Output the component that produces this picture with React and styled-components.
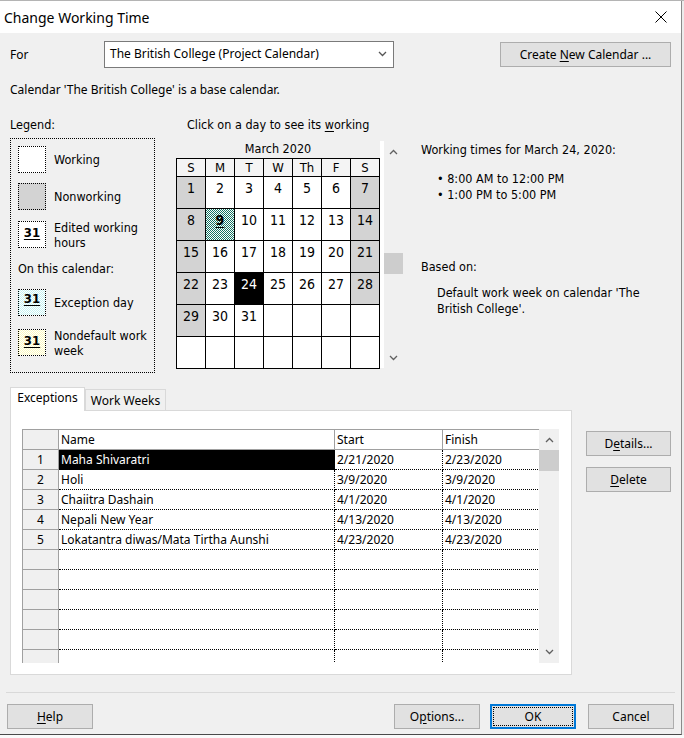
import React from "react";
import styled, { createGlobalStyle, css } from "styled-components";

const UI = `"Noto Sans", "Open Sans", Arial, sans-serif`;
const TH = `"DejaVu Sans Condensed", "DejaVu Sans", sans-serif`;

const GlobalStyle = createGlobalStyle`
  html, body { margin: 0; padding: 0; }
  body { width: 684px; height: 738px; overflow: hidden; background: #ececec; font-family: ${UI}; color: #000; }
  * { box-sizing: border-box; }
`;

const Screen = styled.div`
  width: 684px;
  height: 738px;
  border-top: 1px solid #b4b4b4;
  display: flex;
  flex-direction: column;
  background: #ececec;
`;

const Dialog = styled.div`
  width: 682px;
  height: 734px;
  flex: none;
  display: flex;
  flex-direction: column;
  background: #f0f0f0;
  border-right: 1px solid #8a8a8a;
  border-bottom: 1px solid #4a4a4a;
`;

const BackStrip = styled.div`
  flex: 1;
  background: #fafafa;
`;

const TitleBar = styled.div`
  height: 32px;
  flex: none;
  background: #fff;
  display: flex;
  align-items: center;
  padding-left: 4px;
  font: 14px ${UI};
`;

const CloseBox = styled.div`
  margin-left: auto;
  margin-right: 14px;
  width: 12px;
  height: 12px;
  display: flex;
`;

const Body = styled.div`
  flex: 1;
  display: flex;
  flex-direction: column;
  font: 12px ${UI};
`;

const ForRow = styled.div`
  display: flex;
  align-items: center;
  margin-top: 8px;
  padding: 0 10px;
`;

const ForLabel = styled.div`
  width: 94px;
`;

const Combo = styled.div`
  width: 290px;
  height: 27px;
  background: #fff;
  border: 1px solid #7a7a7a;
  display: flex;
  align-items: center;
  padding: 0 6px 2px 5px;
`;

const ComboText = styled.span`
  flex: 1;
`;

const Btn = styled.button`
  width: ${(p) => p.$w || 86}px;
  height: 25px;
  flex: none;
  padding: 0;
  margin-left: ${(p) => p.$ml || 0}px;
  background: #e1e1e1;
  border: 1px solid #adadad;
  font: 12px ${UI};
  color: #000;
  position: relative;
  ${(p) =>
    p.$primary &&
    css`
      border: 2px solid #0078d7;
      &::after {
        content: "";
        position: absolute;
        inset: 1px;
        border: 1px dotted #000;
      }
    `}
`;

const U = styled.span`
  text-decoration: underline;
  text-underline-offset: 2px;
`;

const Line = styled.div`
  margin: ${(p) => p.$m || "0"};
  line-height: 16px;
`;

const Middle = styled.div`
  display: flex;
  margin-top: 19px;
  padding-left: 10px;
  font: 12.5px ${TH};
`;

const LegendCol = styled.div`
  width: 145px;
  flex: none;
  display: flex;
  flex-direction: column;
`;

const Heading = styled.div`
  line-height: 16px;
  height: 16px;
  padding-left: ${(p) => p.$pl || 0}px;
`;

const LegendBox = styled.div`
  margin-top: 5px;
  height: 235px;
  border: 1px dotted #000;
  padding: 7px 0 0 7px;
  display: flex;
  flex-direction: column;
`;

const LegendItem = styled.div`
  display: flex;
  align-items: center;
  gap: 8px;
  height: 27px;
  margin-top: ${(p) => p.$mt || 0}px;
  line-height: 15px;
`;

const LegendSub = styled.div`
  margin-top: ${(p) => p.$mt || 0}px;
  line-height: 16px;
`;

const swatchBg = {
  working: "#fff",
  nonworking: "#d3d3d3",
  edited: "#fff",
  exception: "repeating-conic-gradient(#c6f3f3 0 25%, #ffffff 0 50%) 0 0 / 2px 2px",
  nondefault: "repeating-conic-gradient(#fcfac0 0 25%, #ffffff 0 50%) 0 0 / 2px 2px",
};

const Swatch = styled.div`
  width: 28px;
  height: 27px;
  flex: none;
  border: 1px dotted #000;
  background: ${(p) => swatchBg[p.$kind]};
  display: flex;
  justify-content: center;
  padding-top: ${(p) => (p.$kind === "exception" ? 1 : 3)}px;
  font: bold 13px ${TH};
  line-height: 16px;
`;

const Num31 = styled.span`
  text-decoration: underline;
  text-underline-offset: 2px;
`;

const CalCol = styled.div`
  margin-left: 21px;
  display: flex;
  flex-direction: column;
`;

const CalRow = styled.div`
  display: flex;
  margin-top: 8px;
`;

const Calendar = styled.div`
  width: 204px;
  display: flex;
  flex-direction: column;
`;

const MonthTitle = styled.div`
  height: 17px;
  line-height: 16px;
  text-align: center;
  font: 12.5px ${TH};
`;

const Grid = styled.div`
  display: grid;
  grid-template-columns: repeat(7, 28px);
  grid-template-rows: 17px repeat(6, 31px);
  gap: 1px;
  background: #000;
  border: 1px solid #000;
`;

const DayHead = styled.div`
  background: #f4f4f4;
  text-align: center;
  font: 13px ${TH};
  line-height: 17px;
`;

const dayBg = {
  empty: "#fff",
  work: "#fff",
  off: "#d3d3d3",
  sel: "#000",
  exc: "repeating-conic-gradient(#157563 0 25%, #ffffff 0 50%) 0 0 / 2px 2px",
};

const Day = styled.div`
  background: ${(p) => dayBg[p.$kind]};
  color: ${(p) => (p.$kind === "sel" ? "#fff" : "#000")};
  text-align: center;
  padding-top: 2px;
  font: ${(p) => (p.$kind === "exc" ? "bold " : "")}14px ${TH};
  line-height: 18px;
  ${(p) =>
    p.$kind === "exc" &&
    css`
      text-decoration: underline;
      text-underline-offset: 2px;
    `}
`;

const WhiteStrip = styled.div`
  width: 4px;
  height: 227px;
  background: #fff;
`;

const VScroll = styled.div`
  width: ${(p) => p.$w}px;
  height: ${(p) => p.$h}px;
  flex: none;
  display: flex;
  flex-direction: column;
  background: ${(p) => p.$bg || "transparent"};
`;

const ArrowBox = styled.div`
  height: ${(p) => p.$h}px;
  flex: none;
  display: flex;
  align-items: center;
  justify-content: center;
`;

const Thumb = styled.div`
  height: ${(p) => p.$h}px;
  margin-top: ${(p) => p.$mt || 0}px;
  background: #cdcdcd;
  flex: none;
`;

const Spacer = styled.div`
  flex: 1;
`;

const InfoCol = styled.div`
  margin-left: 18px;
  padding-top: 25px;
  display: flex;
  flex-direction: column;
`;

const InfoLine = styled.div`
  line-height: 16px;
  margin-top: ${(p) => p.$mt || 0}px;
  padding-left: ${(p) => p.$pl || 0}px;
`;

const TabsRow = styled.div`
  display: flex;
  margin-top: 14px;
  padding: 0 10px;
`;

const TabArea = styled.div`
  width: 562px;
  display: flex;
  flex-direction: column;
`;

const TabStrip = styled.div`
  height: 24px;
  display: flex;
  align-items: flex-end;
  margin-bottom: -1px;
  position: relative;
  z-index: 1;
`;

const Tab = styled.div`
  height: ${(p) => (p.$active ? 24 : 22)}px;
  width: ${(p) => p.$w}px;
  background: ${(p) => (p.$active ? "#fff" : "#f0f0f0")};
  border: 1px solid #d9d9d9;
  border-bottom: ${(p) => (p.$active ? "none" : "1px solid #d9d9d9")};
  text-align: center;
  font: 12px ${UI};
  line-height: ${(p) => (p.$active ? 20 : 21)}px;
`;

const Panel = styled.div`
  height: 265px;
  background: #fff;
  border: 1px solid #d9d9d9;
  padding: 18px 0 0 11px;
`;

const Table = styled.div`
  width: 537px;
  height: 234px;
  display: flex;
  overflow: hidden;
`;

const TGrid = styled.div`
  width: 517px;
  display: grid;
  grid-template-columns: 36px 276px 108px 97px;
  grid-auto-rows: 20px;
  border-top: 1px solid #a0a0a0;
  border-left: 1px solid #a0a0a0;
  align-content: start;
  font: 12px ${UI};
`;

const HCell = styled.div`
  background: ${(p) => (p.$corner ? "#f0f0f0" : "#fff")};
  border-right: 1px solid #a0a0a0;
  border-bottom: 1px solid #a0a0a0;
  padding-left: 2px;
  line-height: 19px;
`;

const RCell = styled.div`
  background: #f0f0f0;
  border-right: 1px solid #a0a0a0;
  border-bottom: 1px solid #a0a0a0;
  text-align: center;
  line-height: 19px;
`;

const DCell = styled.div`
  background: ${(p) => (p.$sel ? "#000" : "#fff")};
  color: ${(p) => (p.$sel ? "#fff" : "#000")};
  border-bottom: 1px dotted #000;
  border-right: ${(p) => (p.$last ? "none" : "1px dotted #000")};
  padding-left: 2px;
  line-height: 19px;
  white-space: nowrap;
  overflow: hidden;
`;

const SideButtons = styled.div`
  margin-left: 14px;
  margin-top: 44px;
  display: flex;
  flex-direction: column;
  gap: 11px;
`;

const Separator = styled.div`
  margin: 17px 6px 0 6px;
  height: 1px;
  background: #d9d9d9;
`;

const Footer = styled.div`
  display: flex;
  margin-top: 11px;
  padding: 0 7px;
`;

const Gap = styled.div`
  width: ${(p) => p.$w}px;
  flex: none;
`;

const Chevron = ({ down, color = "#606060", w = 9, h = 6 }) => (
  <svg width={w} height={h} viewBox="0 0 9 6">
    <polyline
      points={down ? "1,1 4.5,4.5 8,1" : "1,5 4.5,1.5 8,5"}
      fill="none"
      stroke={color}
      strokeWidth="1.3"
    />
  </svg>
);

const CloseIcon = () => (
  <svg width="12" height="12" viewBox="0 0 12 12">
    <path d="M0.5 0.5 L11.5 11.5 M11.5 0.5 L0.5 11.5" stroke="#000" strokeWidth="1" fill="none" />
  </svg>
);

const weeks = [
  [1, 2, 3, 4, 5, 6, 7],
  [8, 9, 10, 11, 12, 13, 14],
  [15, 16, 17, 18, 19, 20, 21],
  [22, 23, 24, 25, 26, 27, 28],
  [29, 30, 31, null, null, null, null],
  [null, null, null, null, null, null, null],
];

const dayKind = (d, col) => {
  if (d == null) return "empty";
  if (d === 24) return "sel";
  if (d === 9) return "exc";
  if (col === 0 || col === 6) return "off";
  return "work";
};

const exceptions = [
  ["Maha Shivaratri", "2/21/2020", "2/23/2020"],
  ["Holi", "3/9/2020", "3/9/2020"],
  ["Chaiitra Dashain", "4/1/2020", "4/1/2020"],
  ["Nepali New Year", "4/13/2020", "4/13/2020"],
  ["Lokatantra diwas/Mata Tirtha Aunshi", "4/23/2020", "4/23/2020"],
];

export default function App() {
  const rows = [];
  for (let i = 0; i < 11; i++) rows.push(exceptions[i] || null);

  return (
    <>
      <GlobalStyle />
      <Screen>
        <Dialog>
          <TitleBar>
            Change Working Time
            <CloseBox>
              <CloseIcon />
            </CloseBox>
          </TitleBar>
          <Body>
            <ForRow>
              <ForLabel>For</ForLabel>
              <Combo>
                <ComboText>The British College (Project Calendar)</ComboText>
                <Chevron down color="#555" w={9} h={6} />
              </Combo>
              <Gap $w={106} />
              <Btn $w={171}>
                Create <U>N</U>ew Calendar ...
              </Btn>
            </ForRow>
            <Line $m="14px 0 0 10px">Calendar 'The British College' is a base calendar.</Line>

            <Middle>
              <LegendCol>
                <Heading>Legend:</Heading>
                <LegendBox>
                  <LegendItem>
                    <Swatch $kind="working" />
                    Working
                  </LegendItem>
                  <LegendItem $mt={10}>
                    <Swatch $kind="nonworking" />
                    Nonworking
                  </LegendItem>
                  <LegendItem $mt={11}>
                    <Swatch $kind="edited">
                      <Num31>31</Num31>
                    </Swatch>
                    <span>
                      Edited working
                      <br />
                      hours
                    </span>
                  </LegendItem>
                  <LegendSub $mt={13}>On this calendar:</LegendSub>
                  <LegendItem $mt={12}>
                    <Swatch $kind="exception">
                      <Num31>31</Num31>
                    </Swatch>
                    Exception day
                  </LegendItem>
                  <LegendItem $mt={13}>
                    <Swatch $kind="nondefault">
                      <Num31>31</Num31>
                    </Swatch>
                    <span>
                      Nondefault work
                      <br />
                      week
                    </span>
                  </LegendItem>
                </LegendBox>
              </LegendCol>

              <CalCol>
                <Heading $pl={11}>
                  Click on a day to see its <U>w</U>orking
                </Heading>
                <CalRow>
                  <Calendar>
                    <MonthTitle>March 2020</MonthTitle>
                    <Grid>
                      {["S", "M", "T", "W", "Th", "F", "S"].map((h, i) => (
                        <DayHead key={"h" + i}>{h}</DayHead>
                      ))}
                      {weeks.map((w, r) =>
                        w.map((d, c) => (
                          <Day key={r + "-" + c} $kind={dayKind(d, c)}>
                            {d}
                          </Day>
                        ))
                      )}
                    </Grid>
                  </Calendar>
                  <WhiteStrip />
                  <VScroll $w={19} $h={227}>
                    <ArrowBox $h={22}>
                      <Chevron />
                    </ArrowBox>
                    <Thumb $h={21} $mt={90} />
                    <Spacer />
                    <ArrowBox $h={20}>
                      <Chevron down />
                    </ArrowBox>
                  </VScroll>
                </CalRow>
              </CalCol>

              <InfoCol>
                <InfoLine>Working times for March 24, 2020:</InfoLine>
                <InfoLine $mt={13} $pl={16}>
                  • 8:00 AM to 12:00 PM
                </InfoLine>
                <InfoLine $pl={16}>• 1:00 PM to 5:00 PM</InfoLine>
                <InfoLine $mt={56}>Based on:</InfoLine>
                <InfoLine $mt={10} $pl={16}>
                  Default work week on calendar 'The
                  <br />
                  British College'.
                </InfoLine>
              </InfoCol>
            </Middle>

            <TabsRow>
              <TabArea>
                <TabStrip>
                  <Tab $active $w={75}>
                    Exceptions
                  </Tab>
                  <Tab $w={81}>Work Weeks</Tab>
                </TabStrip>
                <Panel>
                  <Table>
                    <TGrid>
                      <HCell $corner />
                      <HCell>Name</HCell>
                      <HCell>Start</HCell>
                      <HCell>Finish</HCell>
                      {rows.map((r, i) => (
                        <React.Fragment key={i}>
                          <RCell>{r ? i + 1 : ""}</RCell>
                          <DCell $sel={i === 0}>{r ? r[0] : ""}</DCell>
                          <DCell>{r ? r[1] : ""}</DCell>
                          <DCell $last>{r ? r[2] : ""}</DCell>
                        </React.Fragment>
                      ))}
                    </TGrid>
                    <VScroll $w={20} $h={234} $bg="#f0f0f0">
                      <ArrowBox $h={21}>
                        <Chevron />
                      </ArrowBox>
                      <Thumb $h={21} />
                      <Spacer />
                      <ArrowBox $h={22}>
                        <Chevron down />
                      </ArrowBox>
                    </VScroll>
                  </Table>
                </Panel>
              </TabArea>
              <SideButtons>
                <Btn $w={85}>
                  D<U>e</U>tails...
                </Btn>
                <Btn $w={85}>
                  <U>D</U>elete
                </Btn>
              </SideButtons>
            </TabsRow>

            <Separator />

            <Footer>
              <Btn>
                <U>H</U>elp
              </Btn>
              <Spacer />
              <Btn>
                O<U>p</U>tions...
              </Btn>
              <Btn $primary $ml={10}>
                OK
              </Btn>
              <Btn $ml={12}>Cancel</Btn>
            </Footer>
          </Body>
        </Dialog>
        <BackStrip />
      </Screen>
    </>
  );
}
